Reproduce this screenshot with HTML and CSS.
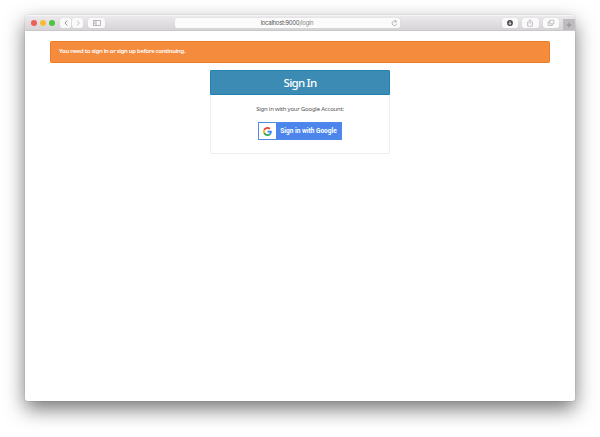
FILE: index.html
```html
<!DOCTYPE html>
<html lang="en">
<head>
<meta charset="utf-8">
<title>Sign In</title>
<link rel="stylesheet" href="styles.css">
</head>
<body>
<div class="window">
  <header class="toolbar">
    <div class="lights"><i class="light red"></i><i class="light yellow"></i><i class="light green"></i></div>
    <div class="nav">
      <span class="tool"><svg width="6" height="8" viewBox="0 0 6 8"><path d="M4.300 1.500 2 4l2.300 2.500" stroke="#888" stroke-width=".9"/></svg></span>
      <span class="tool"><svg width="6" height="8" viewBox="0 0 6 8"><path d="m2 1.500 2.300 2.500L2 6.500" stroke="#bbb" stroke-width=".9"/></svg></span>
    </div>
    <span class="tool sidebar"><svg width="8" height="6" viewBox="0 0 8 6"><path d="M.5.5h7v5h-7zM3 .5v5M1.200 2h1M1.200 3.500h1" stroke="#999" stroke-width=".7"/></svg></span>
    <div class="address"><span class="url">localhost:9000<span class="path">/login</span></span>
      <svg class="reload" width="7" height="7" viewBox="0 0 7 7"><path d="M5.300 1.600A2.400 2.400 0 1 0 5.900 3.600M3.800.2l1.700 1.500-1.900.8" stroke="#999" stroke-width=".7"/></svg></div>
    <div class="actions">
      <span class="tool"><svg width="8" height="8" viewBox="0 0 8 8"><circle cx="4" cy="4" r="2.900" fill="#444"/><path d="M4 2.300v3M2.800 4.200 4 5.500l1.200-1.300" stroke="#fff" stroke-width=".9"/></svg></span>
      <span class="tool"><svg width="8" height="8" viewBox="0 0 8 8"><path d="M3 3H1.600v4.200h4.800V3H5M4 5V.8M2.700 2 4 .7 5.300 2" stroke="#aaa" stroke-width=".7"/></svg></span>
      <span class="tool"><svg width="8" height="8" viewBox="0 0 8 8"><path d="M2.800 1.200h4v3.700h-4zM2.800 2.800H1.200v3.700h4V4.900" stroke="#aaa" stroke-width=".7"/></svg></span>
    </div>
    <span class="newtab"><svg width="6" height="6" viewBox="0 0 6 6"><path d="M3 .5v5M.5 3h5" stroke="#888" stroke-width=".8"/></svg></span>
  </header>
  <main class="page">
    <div class="alert"><span class="alert-text">You need to sign in or sign up before continuing.</span></div>
    <section class="card">
      <h1 class="card-title">Sign In</h1>
      <div class="card-body">
        <p class="hint">Sign in with your Google Account:</p>
        <a class="google">
          <span class="logo"><svg width="9" height="9" viewBox="0 0 48 48"><path fill="#ea4335" d="M24 9.500c3.500 0 6.700 1.200 9.200 3.600l6.900-6.900C35.900 2.400 30.500 0 24 0 14.600 0 6.500 5.400 2.600 13.200l8 6.200C12.400 13.700 17.700 9.500 24 9.500z"/><path fill="#4285f4" d="M47 24.600c0-1.600-.2-3.100-.4-4.600H24v9h12.900c-.6 3-2.200 5.500-4.700 7.200l7.700 6C44.400 38 47 31.800 47 24.600z"/><path fill="#fbbc05" d="M10.500 28.600c-.5-1.500-.8-3-.8-4.600s.3-3.100.8-4.600l-8-6.200C.9 16.500 0 20.100 0 24s.9 7.500 2.600 10.800z"/><path fill="#34a853" d="M24 48c6.500 0 11.900-2.100 15.900-5.800l-7.700-6C30 37.700 27.200 38.500 24 38.500c-6.300 0-11.600-4.200-13.500-9.900l-8 6.200C6.500 42.600 14.600 48 24 48z"/></svg></span>
          <span class="google-text">Sign in with Google</span>
        </a>
      </div>
    </section>
  </main>
</div>
</body>
</html>
```
FILE: styles.css
```css
* { box-sizing: border-box; }
body { margin: 0; padding: 15px 25px 36px; height: 437px; overflow: hidden; background: #fff; font-family: "Noto Sans", sans-serif; }
svg { display: block; fill: none; }
.window { height: 386px; border-radius: 3px 3px 2px 2px; background: #fff; box-shadow: 0 0 1px rgba(0,0,0,.45), 0 8px 20px rgba(0,0,0,.54); }
.toolbar { display: flex; align-items: center; height: 16px; padding-left: 6px; border-radius: 3px 3px 0 0; background: linear-gradient(#ebe9eb, #d6d4d6); border-top: 1px solid #f6f6f6; border-bottom: 1px solid #c9c7c9; }
.lights { display: flex; gap: 3px; width: 29px; }
.light { width: 6px; height: 6px; border-radius: 50%; }
.red { background: #ee5f55; }
.yellow { background: #f6bc3a; }
.green { background: #4cc33f; }
.nav { display: flex; gap: 1px; width: 23px; }
.tool { display: flex; align-items: center; justify-content: center; flex: 1; height: 10px; border-radius: 2px; background: #fafafa; box-shadow: 0 0 1px rgba(0,0,0,.15); }
.sidebar { flex: none; width: 17px; margin-left: 5px; }
.address { display: flex; align-items: center; justify-content: flex-end; width: 225px; height: 10px; margin-left: 70px; padding-right: 2px; border-radius: 2px; background: #fbfbfb; box-shadow: 0 0 1px rgba(0,0,0,.15); }
.url { flex: 1; padding-left: 8px; text-align: center; font: 6px/10px "Inter", sans-serif; letter-spacing: -.28px; color: #555; }
.path { color: #888; }
.actions { display: flex; gap: 4px; width: 57px; margin-left: 102px; }
.newtab { display: flex; align-items: center; justify-content: center; align-self: flex-end; width: 12px; height: 11px; margin-left: auto; background: #bebcbe; }
.page { padding: 10px 25px; }
.alert { height: 22px; padding: 0 8px; border: 1px solid #ef7c20; border-radius: 1.5px; background: #f48b3d; color: #fff; font-size: 6px; letter-spacing: -.32px; line-height: 18px; font-weight: 600; white-space: nowrap; }
.card { width: 180px; height: 84px; margin: 7px auto 0; border: 1px solid #eee; border-top: 0; border-radius: 2px; }
.card-title { height: 25px; margin: 0 -1px; border: 1px solid #2282af; border-radius: 1px 1px 0 0; background: #3c8bb5; color: #fff; font-size: 11.5px; letter-spacing: -.75px; line-height: 23px; font-weight: 500; text-align: center; }
.card-body { display: flex; flex-direction: column; align-items: center; padding-top: 9px; }
.hint { margin: 0; color: #555; font-size: 6px; letter-spacing: -.22px; line-height: 10px; white-space: nowrap; }
.google { display: flex; width: 84px; height: 18px; margin-top: 8px; border: 1px solid #5089ea; background: #4c86ec; }
.logo { display: flex; align-items: center; justify-content: center; width: 17px; background: #fff; }
.google-text { flex: 1; color: #fff; font: 700 6.5px/16px Roboto, sans-serif; text-align: center; white-space: nowrap; }
```
